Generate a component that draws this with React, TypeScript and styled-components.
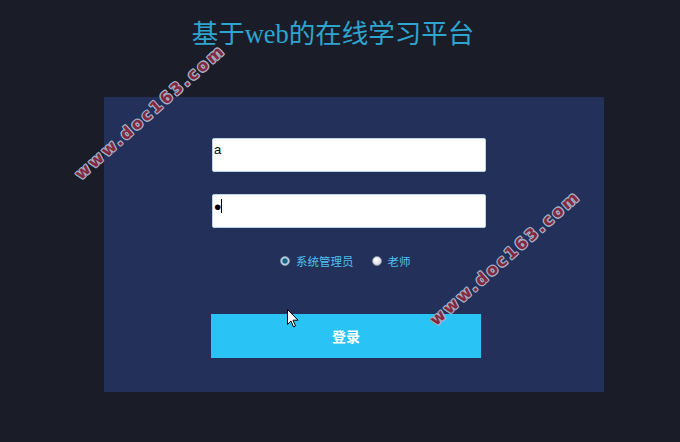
import React, { useState } from "react";
import styled, { createGlobalStyle } from "styled-components";

const GlobalStyle = createGlobalStyle`
  html, body {
    margin: 0;
    padding: 0;
    background: #1a1d28;
    font-family: "Liberation Sans", "Noto Sans CJK SC", sans-serif;
  }
`;

const Page = styled.div`
  position: relative;
  width: 680px;
  height: 442px;
  overflow: hidden;
  background: #1a1d28;
  display: flex;
  flex-direction: column;
  align-items: flex-start;
`;

const Title = styled.h1`
  margin: 0;
  width: 100%;
  padding: 16px 14px 0 0;
  height: 97px;
  box-sizing: border-box;
  text-align: center;
  font-family: "Liberation Serif", "Noto Sans CJK SC", serif;
  font-weight: normal;
  font-size: 26.5px;
  line-height: 36px;
  color: #2ea4d0;
`;

const Panel = styled.div`
  margin-left: 104px;
  width: 500px;
  height: 295px;
  box-sizing: border-box;
  background: #22305a;
  padding: 41px 0 0 107px;
  display: flex;
  flex-direction: column;
  align-items: flex-start;
`;

const Fields = styled.div`
  display: flex;
  flex-direction: column;
  gap: 22px;
  padding-left: 1px;
`;

const FieldWrap = styled.div`
  position: relative;
`;

const Field = styled.input<{ $big?: boolean }>`
  display: block;
  width: 274px;
  height: 34px;
  box-sizing: border-box;
  margin: 0;
  padding: 0 0 ${(p) => (p.$big ? "9px" : "12px")} 1px;
  border: 1px solid #b6d4ea;
  border-radius: 2px;
  background: #ffffff;
  font-family: "Liberation Sans", sans-serif;
  font-size: ${(p) => (p.$big ? "21px" : "13px")};
  color: #000;
  outline: none;
`;

const Caret = styled.span`
  position: absolute;
  left: 9px;
  top: 5px;
  width: 1px;
  height: 14px;
  background: #000;
`;

const RoleRow = styled.div`
  display: flex;
  align-items: center;
  gap: 18px;
  margin: 26px 0 0 69px;
  height: 14px;
`;

const RoleOption = styled.label`
  display: flex;
  align-items: center;
  gap: 6px;
  font-size: 11.5px;
  color: #53c0ee;
  cursor: pointer;
`;

const RadioDot = styled.span<{ $on: boolean }>`
  width: 10px;
  height: 10px;
  border-radius: 50%;
  box-sizing: border-box;
  border: 1px solid #8a97a8;
  background: ${(p) =>
    p.$on
      ? "radial-gradient(circle, #1f5f82 0 2.2px, #6fb3d6 2.8px, #e8eef4 4px)"
      : "radial-gradient(circle at 40% 35%, #ffffff, #c9ced6)"};
`;

const LoginButton = styled.button`
  display: block;
  margin: 46px 0 0 0;
  width: 270px;
  height: 44px;
  border: none;
  background: #29c3f6;
  color: #ffffff;
  font-family: "Noto Sans CJK SC", sans-serif;
  font-weight: bold;
  font-size: 14px;
  cursor: pointer;
`;

const Watermark = styled.div<{ $x: number; $y: number }>`
  position: absolute;
  left: ${(p) => p.$x}px;
  top: ${(p) => p.$y}px;
  transform: translate(-50%, -50%) rotate(-41.5deg);
  font-family: "DejaVu Sans", sans-serif;
  font-weight: bold;
  font-size: 16px;
  letter-spacing: 2.6px;
  color: #842840;
  white-space: nowrap;
  text-shadow: 1px 0 #a3afc4, -1px 0 #a3afc4, 0 1px #a3afc4, 0 -1px #a3afc4,
    1px 1px #a3afc4, -1px -1px #a3afc4, 1px -1px #a3afc4, -1px 1px #a3afc4;
  pointer-events: none;
`;

const Cursor = styled.svg`
  position: absolute;
  left: 287px;
  top: 309px;
  pointer-events: none;
`;

const roles = ["系统管理员", "老师"];

export default function App() {
  const [role, setRole] = useState(0);
  return (
    <Page>
      <GlobalStyle />
      <Title>基于web的在线学习平台</Title>
      <Panel>
        <Fields>
          <Field type="text" defaultValue="a" />
          <FieldWrap>
            <Field type="password" defaultValue="a" $big />
            <Caret />
          </FieldWrap>
        </Fields>
        <RoleRow>
          {roles.map((r, i) => (
            <RoleOption key={r} onClick={() => setRole(i)}>
              <RadioDot $on={role === i} />
              {r}
            </RoleOption>
          ))}
        </RoleRow>
        <LoginButton>登录</LoginButton>
      </Panel>
      <Watermark $x={150} $y={112}>www.doc163.com</Watermark>
      <Watermark $x={505} $y={258}>www.doc163.com</Watermark>
      <Cursor width="13" height="20" viewBox="0 0 13 20">
        <path d="M0.5 0.5 L0.5 15.5 L4 12 L6.5 18 L8.5 17 L6 11.2 L11 11.2 Z" fill="#fff" stroke="#000" strokeWidth="1" />
      </Cursor>
    </Page>
  );
}
